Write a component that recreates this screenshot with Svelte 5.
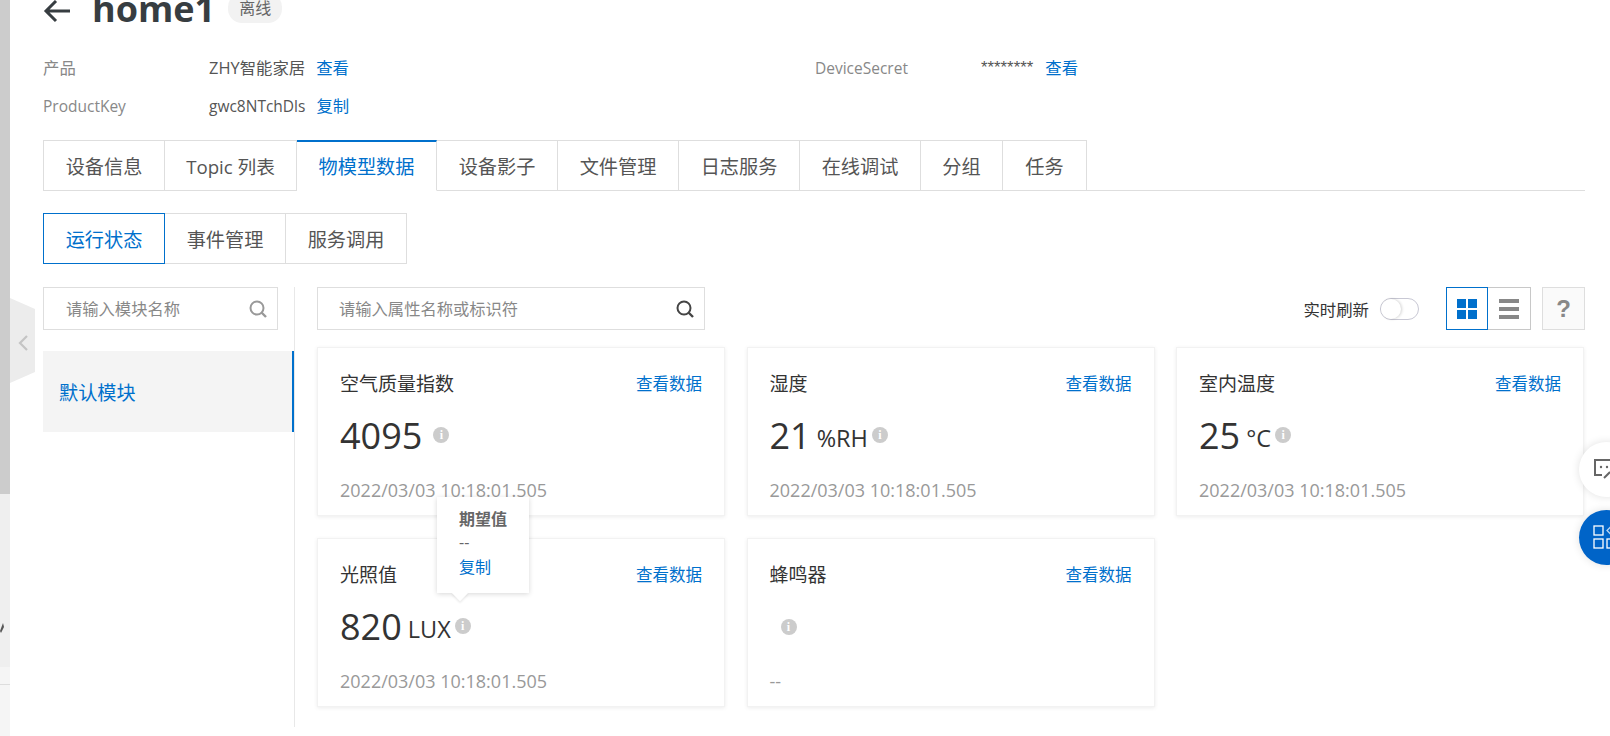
<script>
  const tabs = [
    ['设备信息', 122], ['Topic 列表', 132], ['物模型数据', 140], ['设备影子', 121], ['文件管理', 121],
    ['日志服务', 121], ['在线调试', 121], ['分组', 82], ['任务', 84]
  ];
  const subs = ['运行状态', '事件管理', '服务调用'];
  const cards = [
    { title: '空气质量指数', value: '4095', unit: '', time: '2022/03/03 10:18:01.505', gap: true },
    { title: '湿度', value: '21', unit: '%RH', time: '2022/03/03 10:18:01.505' },
    { title: '室内温度', value: '25', unit: '°C', time: '2022/03/03 10:18:01.505' },
    { title: '光照值', value: '820', unit: 'LUX', time: '2022/03/03 10:18:01.505', tip: true },
    { title: '蜂鸣器', value: '', unit: '', time: '--' }
  ];
</script>

<div class="page">
  <aside class="strip">
    <div class="s1"></div>
    <div class="s2"><svg class="mark" width="4" height="10" viewBox="0 0 4 10"><path d="M0 8 L3 0 L4 4 L1 10 Z" fill="#555"/></svg></div>
    <div class="s2b"></div>
    <div class="s3"></div>
  </aside>

  <button class="handle" aria-label="collapse">
    <svg width="10" height="16" viewBox="0 0 10 16"><path d="M9 1 L2 8 L9 15" fill="none" stroke="#c4c4c4" stroke-width="2.2"/></svg>
  </button>

  <main class="main">
    <header class="head">
      <svg class="back" width="28" height="24" viewBox="0 0 28 24"><path d="M27 12 H3 M13 2 L3 12 L13 22" fill="none" stroke="#373d41" stroke-width="3"/></svg>
      <h1>home1</h1>
      <span class="badge">离线</span>
    </header>

    <section class="info">
      <div class="info-cell"><span class="k cjk">产品</span><span class="v cjk">ZHY智能家居</span><a href="#a">查看</a></div>
      <div class="info-cell second"><span class="k">DeviceSecret</span><span class="v stars">********</span><a href="#a">查看</a></div>
      <div class="info-cell"><span class="k">ProductKey</span><span class="v">gwc8NTchDls</span><a href="#a">复制</a></div>
    </section>

    <nav class="tabs">
      {#each tabs as t, i}
        <div class="tab" class:on={i === 2} class:latin={i === 1} style="width:{t[1]}px">{t[0]}</div>
      {/each}
    </nav>

    <nav class="subs">
      {#each subs as s, i}
        <div class="sub" class:on={i === 0}>{s}</div>
      {/each}
    </nav>

    <section class="body">
      <div class="modules">
        <div class="search small">
          <span>请输入模块名称</span>
          <svg width="20" height="20" viewBox="0 0 20 20"><circle cx="9" cy="9" r="6.5" fill="none" stroke="#999" stroke-width="2"/><path d="M13.5 13.5 L18 18" stroke="#999" stroke-width="2.4"/></svg>
        </div>
        <div class="module">默认模块</div>
      </div>

      <div class="content">
        <div class="bar">
          <div class="search big">
            <span>请输入属性名称或标识符</span>
            <svg width="20" height="20" viewBox="0 0 20 20"><circle cx="9" cy="9" r="6.5" fill="none" stroke="#444" stroke-width="2"/><path d="M13.5 13.5 L18 18" stroke="#444" stroke-width="2.4"/></svg>
          </div>
          <div class="tools">
            <span class="rt">实时刷新</span>
            <span class="switch"><i></i></span>
            <div class="views">
              <div class="view on">
                <svg width="20" height="20" viewBox="0 0 20 20" fill="#0070cc"><rect width="9" height="9"/><rect x="11" width="9" height="9"/><rect y="11" width="9" height="9"/><rect x="11" y="11" width="9" height="9"/></svg>
              </div>
              <div class="view">
                <svg width="20" height="20" viewBox="0 0 20 20" fill="#888"><rect width="20" height="4"/><rect y="8" width="20" height="4"/><rect y="16" width="20" height="4"/></svg>
              </div>
            </div>
            <div class="help">?</div>
          </div>
        </div>

        <div class="grid">
          {#each cards as c}
            <article class="card">
              <div class="card-top"><span class="title">{c.title}</span><a href="#a">查看数据</a></div>
              <div class="value" class:empty={!c.value}>
                {#if c.value}<span class="num">{c.value}</span>{/if}
                {#if c.unit}<span class="unit">{c.unit}</span>{/if}
                <span class="i" class:wide={c.gap}>i</span>
              </div>
              <div class="time">{c.time}</div>
              {#if c.tip}
                <div class="tip">
                  <b>期望值</b>
                  <span>--</span>
                  <a href="#a">复制</a>
                </div>
              {/if}
            </article>
          {/each}
        </div>
      </div>
    </section>
  </main>

  <button class="fab white" aria-label="feedback">
    <svg width="26" height="24" viewBox="0 0 26 24"><path d="M20 15 V2 H2 V17 H9" fill="none" stroke="#666" stroke-width="2"/><circle cx="8" cy="9" r="1.2" fill="#666"/><circle cx="14" cy="9" r="1.2" fill="#666"/><path d="M11 20 L17 14" stroke="#666" stroke-width="2"/></svg>
  </button>
  <button class="fab blue" aria-label="apps">
    <svg width="30" height="26" viewBox="0 0 30 26" fill="none" stroke="#fff" stroke-width="1.3"><rect x="1" y="1" width="9" height="9"/><rect x="1" y="14" width="9" height="9"/><rect x="14" y="14" width="9" height="9"/><path d="M18.5 1 L23 5.5 L18.5 10 L14 5.5 Z" stroke="#b9d4f0"/></svg>
  </button>
</div>

<style>
  :global(body) { margin: 0; background: #fff; }
  .page {
    position: relative; width: 1610px; height: 736px; overflow: hidden; display: flex; background: #fff;
    font-family: "Open Sans", "Noto Sans CJK SC", sans-serif; color: #333;
  }
  a { color: #0070cc; text-decoration: none; }
  .strip { width: 10px; flex: none; display: flex; flex-direction: column; }
  .s1 { height: 494px; background: #ccc; }
  .s2 { height: 173px; background: #efefef; position: relative; }
  .s2b { height: 17px; background: #f5f5f5; border-bottom: 1px solid #ddd; }
  .s3 { flex: 1; background: #f5f5f5; }
  .mark { position: absolute; left: 0; top: 129px; }
  .handle {
    position: absolute; left: 10px; top: 298px; width: 25px; height: 85px; border: 0; padding: 5px 0 0; background: #ececec;
    clip-path: polygon(0 0, 100% 13%, 100% 87%, 0 100%); display: flex; align-items: center; justify-content: center;
  }
  .main { width: 1542px; margin-left: 33px; flex: none; }
  .head { display: flex; align-items: center; height: 24px; margin-top: -3px; }
  .back { margin-right: 21px; margin-top: 3px; }
  h1 { margin: 0; font-size: 36px; font-weight: 700; line-height: 24px; color: #373d41; }
  .badge { margin-left: 13px; margin-top: -2px; background: #f2f2f2; color: #666; font-size: 16px; border-radius: 14px; padding: 0 11px; line-height: 30px; height: 30px; }
  .info { display: grid; grid-template-columns: 772px 1fr; grid-auto-rows: 38px; margin-top: 28px; font-size: 15.5px; line-height: 38px; height: 76px; }
  .info-cell { display: flex; white-space: nowrap; }
  .info-cell a { font-size: 16.4px; }
  .k { width: 166px; color: #888; flex: none; }
  .k.cjk { font-size: 16.4px; }
  .v { color: #555; margin-right: 11px; }
  .v.cjk { font-size: 16.4px; }
  .v.stars { font-family: "Liberation Sans", sans-serif; font-size: 16.8px; margin-right: 12px; }
  .tabs { display: flex; height: 51px; margin-top: 15px; width: 100%; border-bottom: 1px solid #dedede; box-sizing: border-box; }
  .tab {
    box-sizing: border-box; height: 51px; border: 1px solid #dedede; border-left: 0; display: flex; align-items: center; justify-content: center;
    font-size: 19.2px; color: #555; background: #fff;
  }
  .tab.latin { font-size: 18.67px; }
  .tab:first-child { border-left: 1px solid #dedede; }
  .tab.on { color: #0070cc; border-top: 2px solid #0070cc; border-bottom-color: #fff; }
  .subs { display: flex; margin-top: 22px; height: 51px; }
  .sub {
    box-sizing: border-box; width: 122px; margin-left: -1px; border: 1px solid #dedede; display: flex; align-items: center; justify-content: center;
    font-size: 19.2px; color: #555; background: #fff;
  }
  .sub:first-child { margin-left: 0; }
  .sub.on { color: #0070cc; border-color: #0070cc; position: relative; }
  .body { display: flex; margin-top: 23px; height: 440px; }
  .modules { width: 251px; flex: none; }
  .search {
    box-sizing: border-box; height: 43px; border: 1px solid #dedede; display: flex; align-items: center; justify-content: space-between;
    padding: 0 9px 0 22px; font-size: 16.3px; color: #888;
  }
  .search span { position: relative; top: -1px; }
  .small { width: 235px; }
  .big { width: 388px; padding-left: 21px; }
  .module {
    margin-top: 21px; height: 81px; width: 251px; box-sizing: border-box; background: #f4f4f4; border-right: 2px solid #0070cc; color: #0070cc;
    font-size: 19.2px; display: flex; align-items: center; padding: 0 0 0 16px;
  }
  .content { flex: 1; border-left: 1px solid #e8e8e8; padding-left: 22px; }
  .bar { display: flex; justify-content: space-between; }
  .tools { display: flex; align-items: center; }
  .rt { font-size: 16.4px; color: #333; margin-right: 11px; }
  .switch { width: 39px; height: 22px; box-sizing: border-box; border: 1px solid #c8c8d4; border-radius: 11px; margin-right: 27px; position: relative; background: #fff; }
  .switch i { position: absolute; left: 0; top: 0; width: 20px; height: 20px; border-radius: 50%; background: #fff; box-shadow: 1px 0 3px rgba(0,0,0,.18); }
  .views { display: flex; margin-right: 11px; }
  .view { box-sizing: border-box; width: 43px; height: 43px; border: 1px solid #c8c8c8; border-left: 0; display: flex; align-items: center; justify-content: center; }
  .view.on { border: 1px solid #0070cc; width: 42px; }
  .help { box-sizing: border-box; width: 43px; height: 43px; border: 1px solid #dedede; background: #fafafa; color: #888; font: 700 24px "Liberation Sans", sans-serif; display: flex; align-items: center; justify-content: center; }
  .grid { display: grid; grid-template-columns: 408px 408px 408px; column-gap: 21.5px; row-gap: 22px; margin-top: 17px; }
  .card {
    position: relative; box-sizing: border-box; height: 169px; padding: 17px 22px 0; background: #fff; border: 1px solid #f2f2f2;
    box-shadow: 0 1px 4px rgba(0,0,0,.08);
  }
  .card-top { display: flex; justify-content: space-between; align-items: center; height: 36px; }
  .card-top a { font-size: 16.5px; }
  .title { font-size: 19px; color: #333; }
  .value { display: flex; align-items: center; height: 48px; margin-top: 11px; white-space: nowrap; }
  .num { font-size: 36px; color: #333; line-height: 48px; margin-right: 6px; }
  .unit { font-size: 23.5px; color: #333; margin-right: 4px; position: relative; top: 2px; }
  .i {
    width: 16px; height: 16px; border-radius: 50%; background: #ccc; color: #fff; font: 700 12px/16px "Liberation Serif", serif; text-align: center;
    position: relative; top: -1px; flex: none;
  }
  .i.wide { margin-left: 5px; }
  .value.empty .i { margin-left: 11px; top: 0; }
  .time { margin-top: 18px; font-size: 18px; color: #999; }
  .tip {
    position: absolute; left: 119px; top: -42px; width: 92px; height: 96px; box-sizing: border-box; padding: 11px 22px 0; background: #fff;
    box-shadow: 0 1px 5px rgba(0,0,0,.16); display: flex; flex-direction: column; font-size: 16px; line-height: 23px; z-index: 2; color: #666;
  }
  .tip b { color: #666; }
  .tip a { margin-top: 2px; }
  .tip::after {
    content: ""; position: absolute; left: 15px; bottom: -8px; width: 16px; height: 16px; transform: rotate(45deg) scale(.72); background: #fff; box-shadow: 2px 2px 3px rgba(0,0,0,.08);
  }
  .fab { position: absolute; left: 1579px; width: 55px; height: 55px; border-radius: 50%; border: 0; padding: 0 0 0 14px; display: flex; align-items: center; box-shadow: 0 0 8px rgba(0,0,0,.12); }
  .white { top: 442px; background: #fff; }
  .blue { top: 510px; background: #0064c8; }
</style>
